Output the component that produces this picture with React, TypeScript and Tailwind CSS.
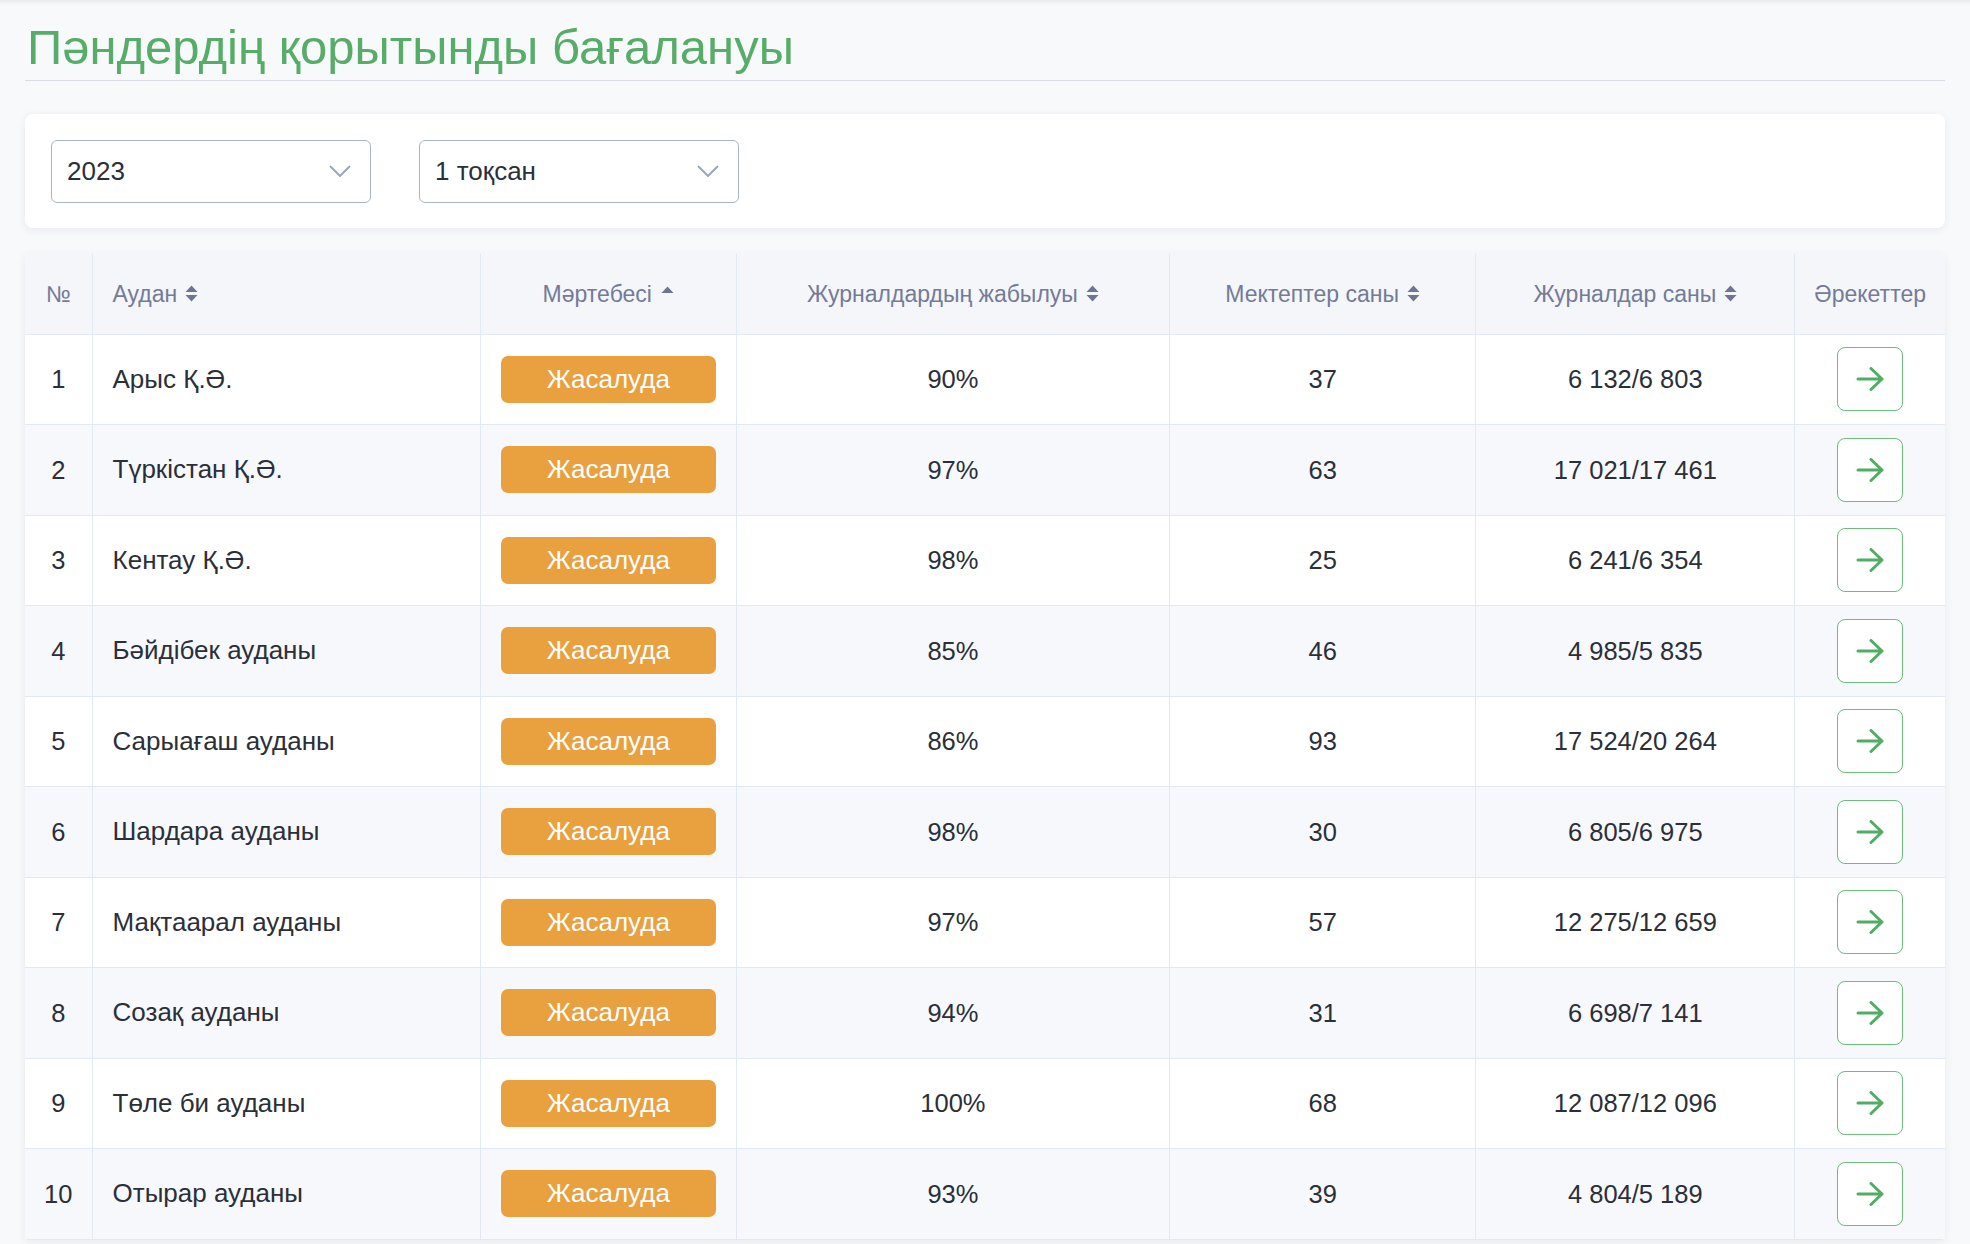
type Row = {
  id: number;
  district: string;
  closed: string;
  schools: number;
  journals: string;
};

const rows: Row[] = [
  { id: 1, district: "Арыс Қ.Ә.", closed: "90%", schools: 37, journals: "6 132/6 803" },
  { id: 2, district: "Түркістан Қ.Ә.", closed: "97%", schools: 63, journals: "17 021/17 461" },
  { id: 3, district: "Кентау Қ.Ә.", closed: "98%", schools: 25, journals: "6 241/6 354" },
  { id: 4, district: "Бәйдібек ауданы", closed: "85%", schools: 46, journals: "4 985/5 835" },
  { id: 5, district: "Сарыағаш ауданы", closed: "86%", schools: 93, journals: "17 524/20 264" },
  { id: 6, district: "Шардара ауданы", closed: "98%", schools: 30, journals: "6 805/6 975" },
  { id: 7, district: "Мақтаарал ауданы", closed: "97%", schools: 57, journals: "12 275/12 659" },
  { id: 8, district: "Созақ ауданы", closed: "94%", schools: 31, journals: "6 698/7 141" },
  { id: 9, district: "Төле би ауданы", closed: "100%", schools: 68, journals: "12 087/12 096" },
  { id: 10, district: "Отырар ауданы", closed: "93%", schools: 39, journals: "4 804/5 189" },
];

function SortIcon() {
  return (
    <svg width="13" height="17" viewBox="0 0 13 17" className="inline-block shrink-0">
      <path d="M6.5 0.5 L12.5 7 H0.5 Z" fill="#6e7592" />
      <path d="M6.5 16.5 L12.5 10 H0.5 Z" fill="#6e7592" />
    </svg>
  );
}

function SortUpIcon() {
  return (
    <svg width="13" height="7" viewBox="0 0 13 7" className="inline-block shrink-0 mt-[9px]">
      <path d="M6.5 0.5 L12.5 7 H0.5 Z" fill="#6e7592" />
    </svg>
  );
}

function Chevron() {
  return (
    <svg width="22" height="12" viewBox="0 0 22 12" fill="none">
      <path d="M1 1 L11 11 L21 1" stroke="#9aa8bc" strokeWidth="2" />
    </svg>
  );
}

function Arrow() {
  return (
    <svg width="28" height="24" viewBox="0 0 28 24" fill="none">
      <path
        d="M2 12 H26 M15 1.5 L26 12 L15 22.5"
        stroke="#4fae62"
        strokeWidth="3"
        strokeLinecap="round"
        strokeLinejoin="round"
      />
    </svg>
  );
}

function Select({ value }: { value: string }) {
  return (
    <div className="w-[320px] h-[63px] border border-[#a9b5c7] rounded-[6px] bg-white flex items-center justify-between pl-[15px] pr-[19px]">
      <span className="text-[26px] text-[#2b2f38]">{value}</span>
      <Chevron />
    </div>
  );
}

const th = "border-r border-b border-[#e2e9f3] text-[23px] font-normal text-[#737b98] h-[80px]";
const td = "border-r border-b border-[#e2e9f3] text-[25.5px] text-[#2b2f38] h-[90.5px]";

export default function App() {
  return (
    <div className="min-h-screen bg-[#f8f9fb] font-['Liberation_Sans',Arial,sans-serif] px-[25px] pt-[19px] shadow-[inset_0_6px_6px_-6px_rgba(0,0,0,0.12)]">
      <h1 className="text-[49px] leading-[56px] text-[#56ad67] pl-[2px] pb-[5px] border-b border-[#d9dce2]">
        Пәндердің қорытынды бағалануы
      </h1>

      <div className="mt-[33px] bg-white rounded-[8px] shadow-[0_2px_8px_rgba(30,45,70,0.08)] h-[114px] px-[26px] flex items-center gap-[48px]">
        <Select value="2023" />
        <Select value="1 тоқсан" />
      </div>

      <div className="mt-[26px] bg-white rounded-[4px] shadow-[0_2px_8px_rgba(30,45,70,0.08)] overflow-hidden">
        <table className="w-full table-fixed border-collapse">
          <colgroup>
            <col className="w-[67px]" />
            <col className="w-[388px]" />
            <col className="w-[256px]" />
            <col className="w-[433px]" />
            <col className="w-[306px]" />
            <col className="w-[319px]" />
            <col className="w-[150px]" />
          </colgroup>
          <thead>
            <tr className="bg-[#f5f6f9]">
              <th className={`${th} text-center`}>№</th>
              <th className={`${th} text-left pl-[20px]`}>
                <span className="inline-flex items-center gap-[8px]">
                  Аудан <SortIcon />
                </span>
              </th>
              <th className={`${th} text-center`}>
                <span className="inline-flex items-start gap-[9px]">
                  Мәртебесі <SortUpIcon />
                </span>
              </th>
              <th className={`${th} text-center`}>
                <span className="inline-flex items-center gap-[8px]">
                  Журналдардың жабылуы <SortIcon />
                </span>
              </th>
              <th className={`${th} text-center`}>
                <span className="inline-flex items-center gap-[8px]">
                  Мектептер саны <SortIcon />
                </span>
              </th>
              <th className={`${th} text-center`}>
                <span className="inline-flex items-center gap-[8px]">
                  Журналдар саны <SortIcon />
                </span>
              </th>
              <th className={`${th} text-center border-r-0`}>Әрекеттер</th>
            </tr>
          </thead>
          <tbody>
            {rows.map((r) => (
              <tr key={r.id} className={r.id % 2 === 0 ? "bg-[#f7f8fc]" : "bg-white"}>
                <td className={`${td} text-center`}>{r.id}</td>
                <td className={`${td} pl-[20px] text-[26px]`}>{r.district}</td>
                <td className={`${td} px-[20px]`}>
                  <div className="h-[47px] rounded-[7px] bg-[#e9a03f] text-white text-[26px] flex items-center justify-center">
                    Жасалуда
                  </div>
                </td>
                <td className={`${td} text-center`}>{r.closed}</td>
                <td className={`${td} text-center`}>{r.schools}</td>
                <td className={`${td} text-center`}>{r.journals}</td>
                <td className={`${td} border-r-0`}>
                  <div className="flex justify-center">
                    <button className="w-[66px] h-[64px] rounded-[8px] border border-[#6dbd7c] bg-white flex items-center justify-center">
                      <Arrow />
                    </button>
                  </div>
                </td>
              </tr>
            ))}
          </tbody>
        </table>
      </div>
    </div>
  );
}
